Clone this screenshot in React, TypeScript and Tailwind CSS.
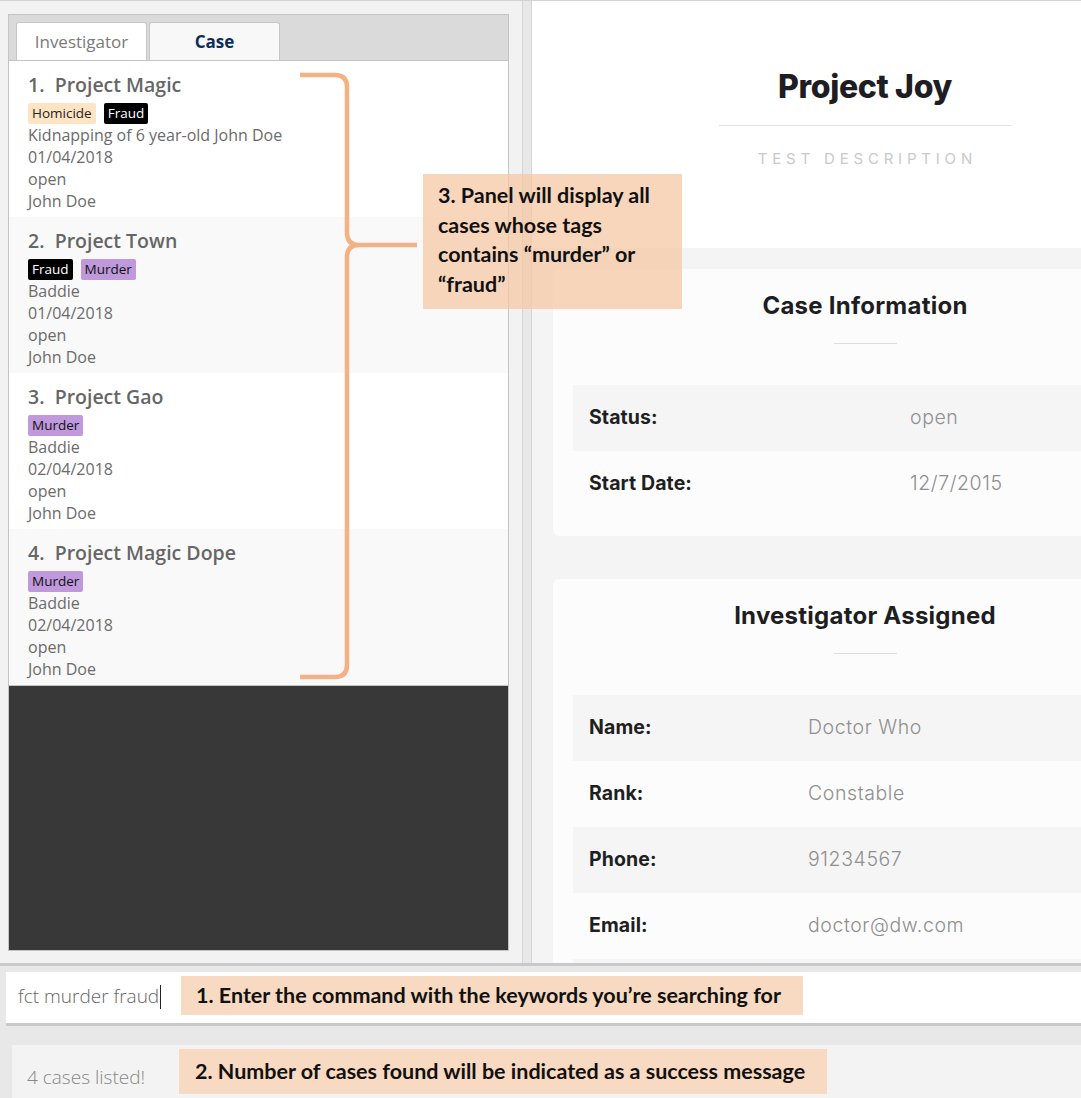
import React from 'react';

type Tag = { label: string; cls: string };
type CaseItem = { n: number; title: string; tags: Tag[]; desc: string; date: string; status: string; inv: string };

const HOM = 'bg-[#ffe4c4] text-[#222]';
const FRA = 'bg-black text-white';
const MUR = 'bg-[#bf99dc] text-[#111]';

const cases: CaseItem[] = [
  { n: 1, title: 'Project Magic', tags: [{ label: 'Homicide', cls: HOM }, { label: 'Fraud', cls: FRA }], desc: 'Kidnapping of 6 year-old John Doe', date: '01/04/2018', status: 'open', inv: 'John Doe' },
  { n: 2, title: 'Project Town', tags: [{ label: 'Fraud', cls: FRA }, { label: 'Murder', cls: MUR }], desc: 'Baddie', date: '01/04/2018', status: 'open', inv: 'John Doe' },
  { n: 3, title: 'Project Gao', tags: [{ label: 'Murder', cls: MUR }], desc: 'Baddie', date: '02/04/2018', status: 'open', inv: 'John Doe' },
  { n: 4, title: 'Project Magic Dope', tags: [{ label: 'Murder', cls: MUR }], desc: 'Baddie', date: '02/04/2018', status: 'open', inv: 'John Doe' },
];

function CaseCard({ c, i }: { c: CaseItem; i: number }) {
  return (
    <div className={`${i % 2 === 0 ? 'bg-white' : 'bg-[#f9f9f9]'} h-[156px] pl-[19px] pt-[10px]`}>
      <div className="text-[19.5px] leading-[28px] font-semibold text-[#666] whitespace-pre">
        {c.n}.{'  '}{c.title}
      </div>
      <div className="mt-[3px] h-[22px] flex items-center gap-[8px]">
        {c.tags.map((t) => (
          <span key={t.label} className={`${t.cls} h-[21px] px-[4px] rounded-[2px] text-[13.5px] leading-[21px]`}>
            {t.label}
          </span>
        ))}
      </div>
      <div className="text-[16px] leading-[22px] text-[#6b6b6b]">
        <div>{c.desc}</div>
        <div>{c.date}</div>
        <div>{c.status}</div>
        <div>{c.inv}</div>
      </div>
    </div>
  );
}

function InfoRow({ label, value, gray, col }: { label: string; value: string; gray: boolean; col: string }) {
  return (
    <div className={`${gray ? 'bg-[#f5f5f5]' : ''} ${col} h-[66px] grid items-center`}>
      <div className="pl-[16px] text-[19.5px] font-bold tracking-[0.005em] text-[#1f1f1f]">{label}</div>
      <div className="text-[19.5px] font-light tracking-[0.03em] text-[#8f8f8f]">{value}</div>
    </div>
  );
}

export default function App() {
  return (
    <div className="relative w-[1081px] h-[1098px] overflow-hidden bg-[#e8e8e8] flex flex-col font-['Open_Sans',sans-serif]">
      {/* main area */}
      <div className="flex h-[963px] shrink-0 border-t border-[#d2d2d2]">
        {/* left panel */}
        <div className="w-[522px] shrink-0 bg-[#f2f2f2] pt-[13px] pl-[8px] pr-[13px] pb-[12px] flex">
          <div className="flex-1 flex flex-col border border-[#c4c4c4]">
            <div className="h-[46px] shrink-0 bg-[#dadada] flex items-end pl-[7px] gap-[2px] border-b border-[#c4c4c4]">
              <div className="w-[131px] h-[38px] bg-white border border-b-0 border-[#c6c6c6] rounded-t-[3px] flex items-center justify-center text-[17px] text-[#7a7a7a]">
                Investigator
              </div>
              <div className="w-[131px] h-[38px] bg-[#f8f8f8] border border-b-0 border-[#c6c6c6] rounded-t-[3px] flex items-center justify-center text-[17px] font-bold text-[#0d2e5a]">
                Case
              </div>
            </div>
            <div className="flex flex-col">
              {cases.map((c, i) => (
                <CaseCard key={c.n} c={c} i={i} />
              ))}
            </div>
            <div className="flex-1 bg-[#383838] border-t border-[#c4c4c4]" />
          </div>
        </div>

        {/* splitter */}
        <div className="w-[10px] shrink-0 bg-[#e8e8e8] border-l border-[#c6c6c6] border-r border-[#d6d6d6]" />

        {/* right panel */}
        <div className="flex-1 overflow-hidden bg-[#f4f4f4] font-['Inter',sans-serif]">
          <div className="w-[666px]">
            <div className="bg-white h-[247px] flex flex-col items-center pt-[66px]">
              <div className="text-[32px] leading-[40px] font-extrabold text-[#1e1e22] tracking-[-0.01em]">Project Joy</div>
              <div className="w-[292px] h-px bg-[#e3e3e3] mt-[18px]" />
              <div className="mt-[23px] text-[15px] leading-[20px] tracking-[0.32em] pl-[0.32em] text-[#c9c9c9]">TEST DESCRIPTION</div>
            </div>
            <div className="px-[21px] pt-[21px] flex flex-col gap-[43px]">
              <div className="bg-[#fcfcfc] rounded-[6px] pt-[22px] pb-[19px] px-[20px] flex flex-col">
                <div className="text-center text-[24px] leading-[30px] font-bold text-[#1e1e22] tracking-[0.01em]">Case Information</div>
                <div className="self-center w-[63px] h-px bg-[#dcdcdc] mt-[22px] mb-[41px]" />
                <InfoRow label="Status:" value="open" gray col="grid-cols-[337px_1fr]" />
                <InfoRow label="Start Date:" value="12/7/2015" gray={false} col="grid-cols-[337px_1fr]" />
              </div>
              <div className="bg-[#fcfcfc] rounded-[6px] pt-[22px] pb-[19px] px-[20px] flex flex-col">
                <div className="text-center text-[24px] leading-[30px] font-bold text-[#1e1e22] tracking-[0.01em]">Investigator Assigned</div>
                <div className="self-center w-[63px] h-px bg-[#dcdcdc] mt-[22px] mb-[41px]" />
                <InfoRow label="Name:" value="Doctor Who" gray col="grid-cols-[235px_1fr]" />
                <InfoRow label="Rank:" value="Constable" gray={false} col="grid-cols-[235px_1fr]" />
                <InfoRow label="Phone:" value="91234567" gray col="grid-cols-[235px_1fr]" />
                <InfoRow label="Email:" value="doctor@dw.com" gray={false} col="grid-cols-[235px_1fr]" />
                <div className="h-[66px] bg-[#f5f5f5]" />
              </div>
            </div>
          </div>
        </div>
      </div>

      {/* bottom area */}
      <div className="flex-1 flex flex-col border-t-[3px] border-[#c9c9c9] pt-[6px]">
        <div className="ml-[6px] h-[54px] shrink-0 bg-white border-b-[3px] border-[#c9c9c9] flex items-center pl-[12px] pb-[2px]">
          <span className="text-[19px] font-light text-[#666]">fct murder fraud</span>
          <span className="ml-[1px] w-px h-[24px] bg-[#222]" />
        </div>
        <div className="ml-[12px] mt-[19px] flex-1 bg-[#f3f3f3] pl-[15px] pt-[19px]">
          <span className="text-[19px] font-light leading-[26px] text-[#888]">4 cases listed!</span>
        </div>
      </div>

      {/* annotation overlay: brace */}
      <svg className="absolute left-0 top-0 pointer-events-none" width="1081" height="1098" viewBox="0 0 1081 1098">
        <path
          d="M300 75 H335 Q347 75 347 87 V233 Q347 245 359 245 H417 M359 245 Q347 245 347 257 V665 Q347 677 335 677 H300"
          fill="none"
          stroke="#f4b183"
          strokeWidth="4.5"
        />
      </svg>

      {/* callouts */}
      <div className="absolute left-[423px] top-[174px] w-[259px] h-[135px] bg-[rgba(245,200,165,0.75)] pl-[15px] pt-[7px] font-['Lato',sans-serif] font-bold text-[21.5px] leading-[29.5px] text-[#111]">
        <div>3. Panel will display all</div>
        <div>cases whose tags</div>
        <div>contains “murder” or</div>
        <div>“fraud”</div>
      </div>
      <div className="absolute left-[181px] top-[976px] w-[622px] h-[39px] bg-[#f8d9c1] flex items-center pl-[15px] font-['Lato',sans-serif] font-bold text-[21.5px] text-[#111]">
        1. Enter the command with the keywords you’re searching for
      </div>
      <div className="absolute left-[179px] top-[1049px] w-[648px] h-[45px] bg-[#f8d9c1] flex items-center pl-[16px] font-['Lato',sans-serif] font-bold text-[21.5px] text-[#111]">
        2. Number of cases found will be indicated as a success message
      </div>
    </div>
  );
}
